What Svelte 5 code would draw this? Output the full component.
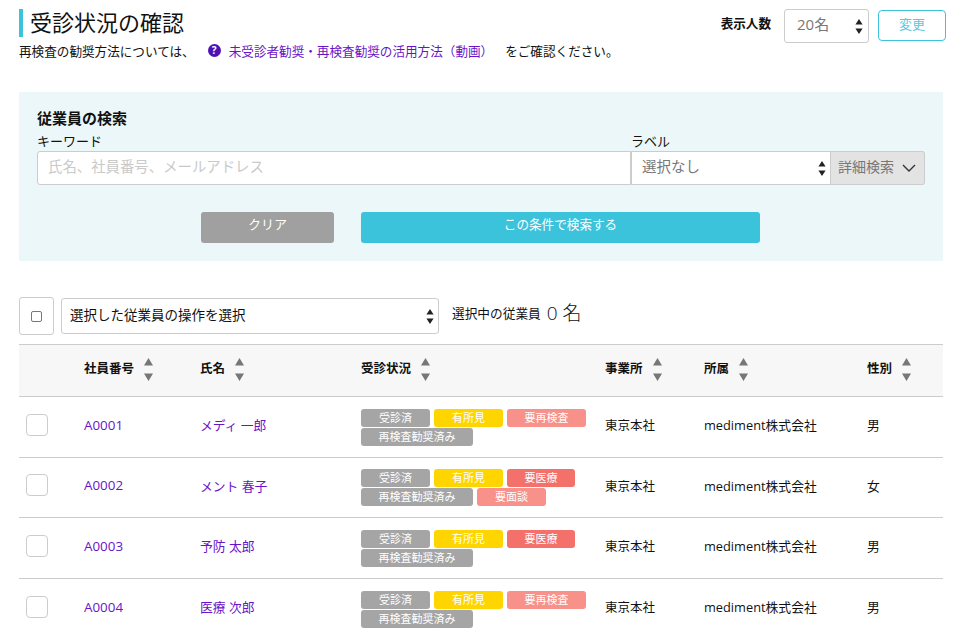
<script>
  const cols = [
    { label: '社員番号', cls: 'c-id' },
    { label: '氏名', cls: 'c-name' },
    { label: '受診状況', cls: 'c-status' },
    { label: '事業所', cls: 'c-office' },
    { label: '所属', cls: 'c-dept' },
    { label: '性別', cls: 'c-sex' }
  ];
  const rows = [
    { id: 'A0001', name: 'メディ 一郎', sex: '男', tags: [['受診済','gray'],['有所見','yellow'],['要再検査','pink'],['再検査勧奨済み','gray wide']] },
    { id: 'A0002', name: 'メント 春子', sex: '女', tags: [['受診済','gray'],['有所見','yellow'],['要医療','red'],['再検査勧奨済み','gray wide'],['要面談','pink']] },
    { id: 'A0003', name: '予防 太郎', sex: '男', tags: [['受診済','gray'],['有所見','yellow'],['要医療','red'],['再検査勧奨済み','gray wide']] },
    { id: 'A0004', name: '医療 次郎', sex: '男', tags: [['受診済','gray'],['有所見','yellow'],['要再検査','pink'],['再検査勧奨済み','gray wide']] }
  ];
</script>

{#snippet updown()}
  <svg class="updown" width="8" height="17" viewBox="0 0 8 17"><path d="M4 1 7.6 6.5H.4Z M4 16 .4 10.5H7.6Z" fill="#222"/></svg>
{/snippet}

<div class="page">
  <header class="top">
    <div class="heading">
      <h1>受診状況の確認</h1>
      <p class="note">
        <span>再検査の勧奨方法については、</span>
        <span class="q">?</span>
        <a href="#video">未受診者勧奨・再検査勧奨の活用方法（動画）</a>
        <span>をご確認ください。</span>
      </p>
    </div>
    <div class="perpage">
      <b>表示人数</b>
      <div class="sel small"><span>20名</span>{@render updown()}</div>
      <button class="change">変更</button>
    </div>
  </header>

  <section class="search">
    <h2>従業員の検索</h2>
    <div class="fields">
      <div class="kw">
        <label for="kw">キーワード</label>
        <div class="input" id="kw">氏名、社員番号、メールアドレス</div>
      </div>
      <div class="lb">
        <span class="lbl">ラベル</span>
        <div class="lbrow">
          <div class="sel label"><span>選択なし</span>{@render updown()}</div>
          <div class="detail"><span>詳細検索</span>
            <svg width="14" height="8" viewBox="0 0 14 8"><path d="M1 1l6 6 6-6" fill="none" stroke="#333" stroke-width="1.4"/></svg>
          </div>
        </div>
      </div>
    </div>
    <div class="actions">
      <button class="clear">クリア</button>
      <button class="go">この条件で検索する</button>
    </div>
  </section>

  <div class="bulk">
    <div class="allcheck"><i></i></div>
    <div class="sel op"><span>選択した従業員の操作を選択</span>{@render updown()}</div>
    <div class="count"><span>選択中の従業員</span><span class="big">0 名</span></div>
  </div>

  <table>
    <thead>
      <tr>
        <th class="c-check"></th>
        {#each cols as c}
          <th class={c.cls}>
            <div class="th"><span>{c.label}</span>
              <svg width="9" height="23" viewBox="0 0 9 23"><path d="M4.5 0 9 7.5H0Z M4.5 23 0 15.5H9Z" fill="#777"/></svg>
            </div>
          </th>
        {/each}
      </tr>
    </thead>
    <tbody>
      {#each rows as r}
        <tr>
          <td class="c-check"><div class="box"></div></td>
          <td><a class="eid" href="#id">{r.id}</a></td>
          <td><a href="#name">{r.name}</a></td>
          <td>
            <div class="tags">
              {#each r.tags as t}<span class={'tag ' + t[1]}>{t[0]}</span>{/each}
            </div>
          </td>
          <td class="office">東京本社</td>
          <td>mediment株式会社</td>
          <td>{r.sex}</td>
        </tr>
      {/each}
    </tbody>
  </table>
</div>

<style>
  :global(body) { margin: 0; background: #fff; overflow: hidden; }
  .page {
    width: 924px; margin-left: 19px; height: 638px;
    font-family: "Open Sans", "Noto Sans CJK JP", sans-serif;
    color: #111; font-size: 13px;
  }
  a { color: #6a14c8; text-decoration: none; }
  .top { display: flex; justify-content: space-between; height: 92px; }
  .heading { padding-top: 9px; }
  h1 {
    margin: 0; height: 28px; line-height: 26px; border-left: 4px solid #3cc3dc;
    padding-left: 7px; font-size: 22px; font-weight: 400; letter-spacing: 0;
  }
  .note { margin: 4px 0 0; display: flex; align-items: center; height: 18px; font-size: 12.6px; white-space: nowrap; }
  .q {
    width: 13px; height: 13px; border-radius: 50%; background: #4b12b4; color: #fff;
    font-size: 10px; font-weight: 700; line-height: 13px; text-align: center; margin: 1px 8px 0 13px;
  }
  .note a { margin-right: 12px; }
  .perpage { display: flex; align-items: flex-start; padding: 9px 0 0; margin-right: -3px; }
  .perpage b { font-size: 12.6px; margin: 4px 13px 0 0; }
  .sel {
    display: flex; align-items: center; justify-content: space-between; box-sizing: border-box;
    border: 1px solid #ccc; background: #fff; border-radius: 3px;
  }
  .sel span { margin-bottom: 4px; }
  .updown { flex: none; }
  .small { width: 85px; height: 34px; padding: 0 5px 0 12px; font-size: 15px; color: #777; }
  .small span, .label span { margin-bottom: 6px; }
  .change {
    width: 68px; height: 31px; margin: 1px 0 0 9px; background: #fff; border: 1px solid #3cc3dc;
    border-radius: 4px; color: #5cc8dc; font: inherit; font-size: 13px; padding: 0 0 4px;
  }
  .search { background: #ecf7f9; height: 169px; box-sizing: border-box; padding: 16px 18px 0; }
  h2 { margin: 0; font-size: 15px; line-height: 20px; font-weight: 700; }
  .fields { display: flex; margin-top: 4px; }
  .kw { width: 594px; }
  .kw label, .lbl { display: block; font-size: 13px; line-height: 18px; height: 19px; }
  .input {
    height: 34px; box-sizing: border-box; border: 1px solid #ccc; border-radius: 3px 0 0 3px; background: #fff;
    padding-left: 10px; line-height: 29px; color: #c9c9c9; font-size: 14.4px;
  }
  .lb { width: 294px; }
  .lbrow { display: flex; height: 34px; }
  .label {
    width: 200px; height: 34px; border-left: 1px solid #ccc; border-radius: 0; padding: 0 4px 0 10px;
    font-size: 14.5px; color: #777;
  }
  .detail {
    width: 94px; box-sizing: border-box; background: #e3e3e3; border: 1px solid #ccc; border-left: 0;
    border-radius: 0 3px 3px 0; display: flex; align-items: center; justify-content: space-between;
    padding: 0 8px 0 7px; color: #777; font-size: 14px; white-space: nowrap;
  }
  .detail span { margin-bottom: 4px; }
  .actions { display: flex; margin: 27px 0 0 164px; gap: 27px; }
  .actions button { height: 31px; border: 0; border-radius: 3px; color: #fff; font: inherit; padding: 0 0 8px; }
  .clear { width: 133px; background: #a0a0a0; font-size: 13px !important; }
  .go { width: 399px; background: #3cc3dc; font-size: 12.6px !important; }
  .bulk { display: flex; align-items: center; margin-top: 36px; height: 38px; }
  .allcheck {
    width: 35px; height: 38px; box-sizing: border-box; border: 1px solid #ccc; border-radius: 3px;
    display: flex; align-items: center; justify-content: center;
  }
  .allcheck i { width: 11px; height: 11px; box-sizing: border-box; border: 1.5px solid #777; border-radius: 2px; }
  .op { width: 378px; height: 36px; margin-left: 7px; padding: 0 4px 0 8px; font-size: 13.5px; }
  .count { margin-left: 13px; font-size: 12.7px; display: flex; align-items: center; padding-bottom: 8px; }
  .big { font-size: 19px; margin-left: 6px; font-weight: 300; }
  table { border-collapse: collapse; width: 924px; table-layout: fixed; margin-top: 9px; }
  thead tr { height: 52px; background: #f7f7f7; border-top: 1px solid #ccc; border-bottom: 1px solid #ccc; }
  th { text-align: left; font-size: 12.5px; padding: 0 0 5px; font-weight: 700; }
  th.c-check { width: 65px; }
  th.c-id { width: 116px; }
  th.c-name { width: 161px; }
  th.c-status { width: 244px; }
  th.c-office { width: 99px; }
  th.c-dept { width: 163px; }
  .th { display: flex; align-items: center; gap: 10px; }
  .th span { margin-bottom: 2px; }
  .th svg { margin-top: 2px; }
  tbody tr { height: 60.6px; border-bottom: 1px solid #ccc; }
  td { padding: 0 0 4px; font-size: 12.8px; white-space: nowrap; }
  td.office { font-size: 12.5px; }
  .eid { font-size: 13.4px; }
  .box { width: 22px; height: 22px; box-sizing: border-box; margin-left: 7px; border: 1px solid #ccc; border-radius: 4px; background: #fff; }
  .tags { display: flex; flex-wrap: wrap; gap: 1px 4px; width: 230px; margin-top: 5px; }
  .tag { height: 18px; line-height: 17px; border-radius: 3px; color: #fff; font-size: 11px; text-align: center; }
  .gray { width: 69px; background: #a5a5a5; }
  .yellow { width: 69px; background: #ffd500; }
  .pink { width: 79px; background: #f79189; }
  .red { width: 68px; background: #f4716b; }
  .tag.wide { width: 112px; }
  .tags .pink:nth-child(5) { width: 69px; }
</style>
